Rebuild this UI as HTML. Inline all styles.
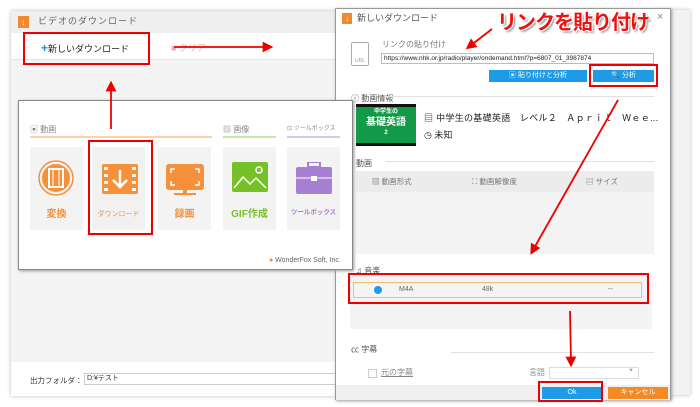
<!DOCTYPE html>
<html><head><meta charset="utf-8"><style>
*{margin:0;padding:0;box-sizing:border-box}
body{width:700px;height:407px;background:#fff;position:relative;overflow:hidden;font-family:"Liberation Sans","Noto Sans CJK JP",sans-serif;font-size:8px;color:#333;line-height:1.2}
.a{position:absolute;white-space:nowrap}
.tile{position:absolute;top:147px;width:53px;height:83px;background:#f3f3f3;text-align:center}
.tile .l{position:absolute;left:0;right:0;top:62px;font-size:10px;font-weight:bold}
.lab{position:absolute;top:125px;font-size:8px;color:#888;white-space:nowrap}
</style></head><body>
<div class="a" style="left:660px;top:10px;width:30px;height:385px;background:#f2f2f2;box-shadow:0 0 4px #bbb"></div>
<div class="a" style="left:11px;top:11px;width:330px;height:385px;background:#f4f4f4;box-shadow:0 0 4px #bbb">
 <div class="a" style="left:0;top:0;width:330px;height:22px;background:#efefef"></div>
 <div class="a" style="left:7px;top:5px;width:11px;height:12px;background:#f08a2c;color:#fff;font-size:9px;text-align:center;line-height:12px">↓</div>
 <div class="a" style="left:27px;top:5px;font-size:9px;color:#666;letter-spacing:1px">ビデオのダウンロード</div>
 <div class="a" style="left:0;top:22px;width:330px;height:27px;background:#fff;border-bottom:1px solid #e4e4e4"></div>
 <div class="a" style="left:30px;top:30px;font-size:9px;color:#222"><span style="color:#1e8fe0;font-size:12px;font-weight:bold">+</span>新しいダウンロード</div>
 <div class="a" style="left:160px;top:32px;font-size:9px;color:#e6b0b0">■ クリア</div>
 <div class="a" style="left:0;top:351px;width:330px;height:34px;background:#fff"></div>
 <div class="a" style="left:19px;top:365px;font-size:7.5px;color:#333">出力フォルダ：</div>
 <div class="a" style="left:73px;top:362px;width:260px;height:12px;border:1px solid #ccc;background:#fff;font-size:7px;padding-left:2px;line-height:10px">D:¥テスト</div>
</div>
<div class="a" style="left:23px;top:32px;width:127px;height:33px;border:2px solid #e00"></div>
<!-- right dialog -->
<div class="a" style="left:335px;top:8px;width:336px;height:392px;background:#fff;border:1px solid #999;box-shadow:1px 1px 3px #999">
 <div class="a" style="left:6px;top:4px;width:10px;height:11px;background:#f08a2c;color:#fff;font-size:8px;text-align:center;line-height:11px">↓</div>
 <div class="a" style="left:21px;top:4px;font-size:9px;color:#555">新しいダウンロード</div>
 <div class="a" style="left:321px;top:2px;font-size:11px;color:#888">×</div>
 <div class="a" style="left:15px;top:33px;width:18px;height:24px;border:1px solid #aaa;border-radius:2px;font-size:5px;color:#999;padding-top:15px;text-align:center">URL</div>
 <div class="a" style="left:46px;top:32px;font-size:8px;color:#777;line-height:1">リンクの貼り付け</div>
 <div class="a" style="left:45px;top:44px;width:273px;height:11px;border:1px solid #bbb;font-size:6.5px;line-height:9px;padding-left:2px;color:#222">https://www.nhk.or.jp/radio/player/ondemand.html?p=6807_01_3987874</div>
 <div class="a" style="left:153px;top:61px;width:98px;height:12px;background:#1e9be8;color:#fff;font-size:7px;line-height:12px;text-align:center">▣ 貼り付けと分析</div>
 <div class="a" style="left:257px;top:61px;width:61px;height:12px;background:#1e9be8;color:#fff;font-size:7px;line-height:12px;text-align:center">🔍 分析</div>
 <div class="a" style="left:15px;top:85px;font-size:8px;color:#555">ⓘ 動画情報</div>
 <div class="a" style="left:50px;top:87px;width:268px;height:1px;background:#e0e0e0"></div>
 <div class="a" style="left:20px;top:95px;width:60px;height:42px;background:#139a48;border-top:3px solid #111;border-bottom:3px solid #111;color:#fff;text-align:center;font-weight:bold;font-size:6px;line-height:8px;padding-top:1px;white-space:normal">中学生の<br><span style="font-size:10px;line-height:13px">基礎英語</span><br>2</div>
 <div class="a" style="left:88px;top:104px;font-size:9px;color:#222;letter-spacing:0.3px">▤ 中学生の基礎英語　レベル２　Ａｐｒｉｌ　Ｗｅｅ...</div>
 <div class="a" style="left:88px;top:121px;font-size:9px;color:#222">◷ 未知</div>
 <div class="a" style="left:20px;top:150px;font-size:8px;color:#555">動画</div>
 <div class="a" style="left:50px;top:152px;width:268px;height:1px;background:#e0e0e0"></div>
 <div class="a" style="left:20px;top:162px;width:298px;height:21px;background:#ececec;font-size:7.5px;color:#777;line-height:21px"><span class="a" style="left:16px">▧ 動画形式</span><span class="a" style="left:116px">⛶ 動画解像度</span><span class="a" style="left:230px">▤ サイズ</span></div>
 <div class="a" style="left:20px;top:183px;width:298px;height:62px;background:#f4f4f4"></div>
 <div class="a" style="left:20px;top:257px;font-size:8px;color:#555">♫ 音楽</div>
 <div class="a" style="left:14px;top:264px;width:302px;height:56px;background:#f4f4f4"></div>
 <div class="a" style="left:17px;top:273px;width:289px;height:16px;border:1px solid #f0c070;background:#f5f5f5;font-size:7px;color:#666;line-height:14px"><span class="a" style="left:20px;top:3px;width:8px;height:8px;border-radius:50%;background:#1e9be8"></span><span class="a" style="left:45px">M4A</span><span class="a" style="left:128px">48k</span><span class="a" style="left:254px">--</span></div>
 <div class="a" style="left:15px;top:336px;font-size:8px;color:#555">㏄ 字幕</div>
 <div class="a" style="left:115px;top:343px;width:203px;height:1px;background:#e0e0e0"></div>
 <div class="a" style="left:32px;top:360px;width:9px;height:9px;border:1px solid #ccc"></div>
 <div class="a" style="left:45px;top:359px;font-size:8px;color:#888;text-decoration:underline">元の字幕</div>
 <div class="a" style="left:193px;top:359px;font-size:8px;color:#888">言語</div>
 <div class="a" style="left:213px;top:358px;width:90px;height:12px;border:1px solid #ddd;font-size:6px;color:#aaa;text-align:right;padding-right:4px">▼</div>
 <div class="a" style="left:0;top:376px;width:334px;height:15px;background:#f0f0f0"></div>
 <div class="a" style="left:206px;top:378px;width:60px;height:12px;background:#1e9be8;color:#fff;font-size:7px;text-align:center;line-height:12px">Ok</div>
 <div class="a" style="left:272px;top:378px;width:60px;height:12px;background:#f58a25;color:#fff;font-size:7px;text-align:center;line-height:12px">キャンセル</div>
</div>
<!-- popup on top -->
<div class="a" style="left:0;top:0;width:700px;height:407px;z-index:5">
<div class="a" style="left:18px;top:100px;width:335px;height:170px;background:#fff;border:1px solid #888;box-shadow:1px 1px 3px #999"></div>
<div class="lab" style="left:30px">▣ 動画</div>
<div class="a" style="left:30px;top:136px;width:182px;height:2px;background:#f9d2ad"></div>
<div class="lab" style="left:223px">▨ 画像</div>
<div class="a" style="left:223px;top:136px;width:53px;height:2px;background:#c6e6a8"></div>
<div class="lab" style="left:287px;font-size:6px;top:126px">⊡ ツールボックス</div>
<div class="a" style="left:287px;top:136px;width:53px;height:2px;background:#d9c6ec"></div>
<div class="tile" style="left:30px"><svg class="a" style="left:7px;top:12px" width="38" height="38"><circle cx="19" cy="19" r="17" fill="none" stroke="#f4913a" stroke-width="1.5"/><circle cx="19" cy="19" r="14" fill="#f4913a"/><rect x="12" y="10" width="14" height="18" fill="none" stroke="#fff" stroke-width="2"/><line x1="16" y1="10" x2="16" y2="28" stroke="#fff"/><line x1="22" y1="10" x2="22" y2="28" stroke="#fff"/></svg><div class="l" style="color:#f4913a">変換</div></div>
<div class="tile" style="left:92px;background:#f1f1f1"><svg class="a" style="left:10px;top:17px" width="36" height="30"><rect x="0" y="0" width="36" height="30" rx="2" fill="#f4913a"/><rect x="2" y="3" width="4" height="3" fill="#fff"/><rect x="2" y="10" width="4" height="3" fill="#fff"/><rect x="2" y="17" width="4" height="3" fill="#fff"/><rect x="2" y="24" width="4" height="3" fill="#fff"/><rect x="30" y="3" width="4" height="3" fill="#fff"/><rect x="30" y="10" width="4" height="3" fill="#fff"/><rect x="30" y="17" width="4" height="3" fill="#fff"/><rect x="30" y="24" width="4" height="3" fill="#fff"/><path d="M18 6V23M11 16l7 7 7-7" stroke="#fff" stroke-width="2.5" fill="none"/></svg><div class="l" style="color:#f4913a;font-size:7px;font-weight:normal;top:64px">ダウンロード</div></div>
<div class="tile" style="left:158px"><svg class="a" style="left:8px;top:17px" width="38" height="34"><rect x="0" y="0" width="38" height="26" rx="3" fill="#f4913a"/><path d="M5 9V5h4M33 9V5h-4M5 17v4h4M33 17v4h-4" stroke="#fff" stroke-width="1.5" fill="none"/><rect x="8" y="29" width="22" height="2" fill="#f4913a"/><rect x="17" y="26" width="4" height="4" fill="#f4913a"/></svg><div class="l" style="color:#f4913a">録画</div></div>
<div class="tile" style="left:223px"><svg class="a" style="left:9px;top:15px" width="36" height="30"><rect width="36" height="30" rx="2" fill="#77c128"/><path d="M2 26l9-11 7 7 6-6 10 10" stroke="#fff" stroke-width="1.5" fill="none"/><circle cx="27" cy="8" r="3" fill="none" stroke="#fff" stroke-width="1.5"/></svg><div class="l" style="color:#77c128">GIF作成</div></div>
<div class="tile" style="left:287px"><svg class="a" style="left:9px;top:15px" width="36" height="32"><rect x="12" y="0" width="12" height="5" fill="none" stroke="#a77fd0" stroke-width="2"/><rect y="5" width="36" height="27" rx="2" fill="#a77fd0"/><line x1="0" y1="16" x2="36" y2="16" stroke="#fff"/><rect x="15" y="14" width="6" height="5" fill="#fff"/></svg><div class="l" style="color:#a77fd0;font-size:6.5px">ツールボックス</div></div>
<div class="a" style="left:88px;top:140px;width:65px;height:95px;border:2px solid #e00"></div>
<div class="a" style="left:269px;top:257px;font-size:7px;color:#666"><span style="color:#f08a2c">●</span> WonderFox Soft, Inc.</div>
</div>
<div class="a" style="z-index:6;left:589px;top:64px;width:69px;height:23px;border:2px solid #e00"></div>
<div class="a" style="z-index:6;left:348px;top:273px;width:301px;height:31px;border:2px solid #e00"></div>
<div class="a" style="z-index:6;left:538px;top:381px;width:65px;height:21px;border:2px solid #e00"></div>
<div class="a" style="z-index:6;left:497px;top:11px;font-size:20px;line-height:1.2;font-weight:bold;color:#f01010;letter-spacing:-1px;text-shadow:1px 1px 0 #fff,-1px -1px 0 #fff,1px -1px 0 #fff,-1px 1px 0 #fff,2px 2px 2px #888">リンクを貼り付け</div>
<svg class="a" style="left:0;top:0;z-index:7" width="700" height="407">
<defs><marker id="m" markerWidth="6" markerHeight="6" refX="3" refY="3" orient="auto"><path d="M0 0L6 3 0 6z" fill="#e00"/></marker></defs>
<g stroke="#e00" stroke-width="1.8" fill="none" marker-end="url(#m)">
<line x1="174" y1="47" x2="268" y2="47"/>
<line x1="111" y1="129" x2="111" y2="86"/>
<line x1="492" y1="29" x2="470" y2="46"/>
<line x1="618" y1="100" x2="533" y2="250"/>
<line x1="570" y1="311" x2="571" y2="362"/>
</g></svg>
</body></html>
